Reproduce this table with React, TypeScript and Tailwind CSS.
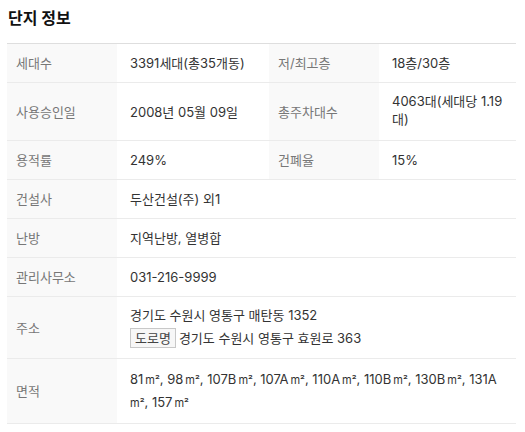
import React from "react";

const font = { fontFamily: 'Inter, "Noto Sans CJK KR", sans-serif' };

function Label({ children }: { children: React.ReactNode }) {
  return (
    <div className="flex items-center bg-[#f9f9f9] pl-[9px] text-[#777] border-b border-[#ebebeb]">
      {children}
    </div>
  );
}

function Value({ children, className = "" }: { children: React.ReactNode; className?: string }) {
  return (
    <div className={`flex items-center pl-[13px] pr-[8px] py-[10px] text-[#333] border-b border-[#ebebeb] ${className}`}>
      {children}
    </div>
  );
}

function M2() {
  return (
    <>
      <span className="inline-block w-[2px]"></span>
      <wbr />
      <span className="text-[11px]">m²</span>
    </>
  );
}

const areas = ["81", "98", "107B", "107A", "110A", "110B", "130B", "131A", "157"];

export default function App() {
  return (
    <div className="w-[525px] h-[432px] bg-white px-[7px] pt-[6px]" style={font}>
      <h2 className="pl-[1px] text-[16px] leading-[24px] font-bold text-[#111]">단지 정보</h2>
      <div className="mt-[13px] w-[509px] border-t border-[#dedede] grid grid-cols-[110px_152px_110px_137px] text-[13px] leading-[18px]">
        <Label>세대수</Label>
        <Value>3391세대(총35개동)</Value>
        <Label>저/최고층</Label>
        <Value>18층/30층</Value>

        <Label>사용승인일</Label>
        <Value>2008년 05월 09일</Value>
        <Label>총주차대수</Label>
        <Value className="pt-[9px] pb-[12px]">4063대(세대당 1.19대)</Value>

        <Label>용적률</Label>
        <Value>249%</Value>
        <Label>건폐율</Label>
        <Value>15%</Value>

        <Label>건설사</Label>
        <div className="col-span-3 flex items-center pl-[13px] py-[10px] text-[#333] border-b border-[#ebebeb]">두산건설(주) 외1</div>

        <Label>난방</Label>
        <div className="col-span-3 flex items-center pl-[13px] py-[10px] text-[#333] border-b border-[#ebebeb]">지역난방, 열병합</div>

        <Label>관리사무소</Label>
        <div className="col-span-3 flex items-center pl-[13px] py-[10px] text-[#333] border-b border-[#ebebeb]">031-216-9999</div>

        <Label>주소</Label>
        <div className="col-span-3 flex flex-col justify-center pl-[13px] pt-[9px] pb-[10px] text-[#333] border-b border-[#ebebeb]">
          <div>경기도 수원시 영통구 매탄동 1352</div>
          <div className="mt-[4px] flex items-center">
            <span className="inline-flex items-center h-[20px] px-[4px] border border-[#c8c8c8] bg-[#f7f7f7] text-[#444] mr-[3px]">도로명</span>
            <span>경기도 수원시 영통구 효원로 363</span>
          </div>
        </div>

        <Label>면적</Label>
        <div className="col-span-3 flex items-center pl-[13px] pr-[8px] py-[9px] text-[#333] leading-[22px] border-b border-[#ebebeb]">
          <div>
            {areas.map((a, i) => (
              <React.Fragment key={a}>
                {a}
                <M2 />
                {i < areas.length - 1 ? ", " : ""}
              </React.Fragment>
            ))}
          </div>
        </div>
      </div>
    </div>
  );
}
